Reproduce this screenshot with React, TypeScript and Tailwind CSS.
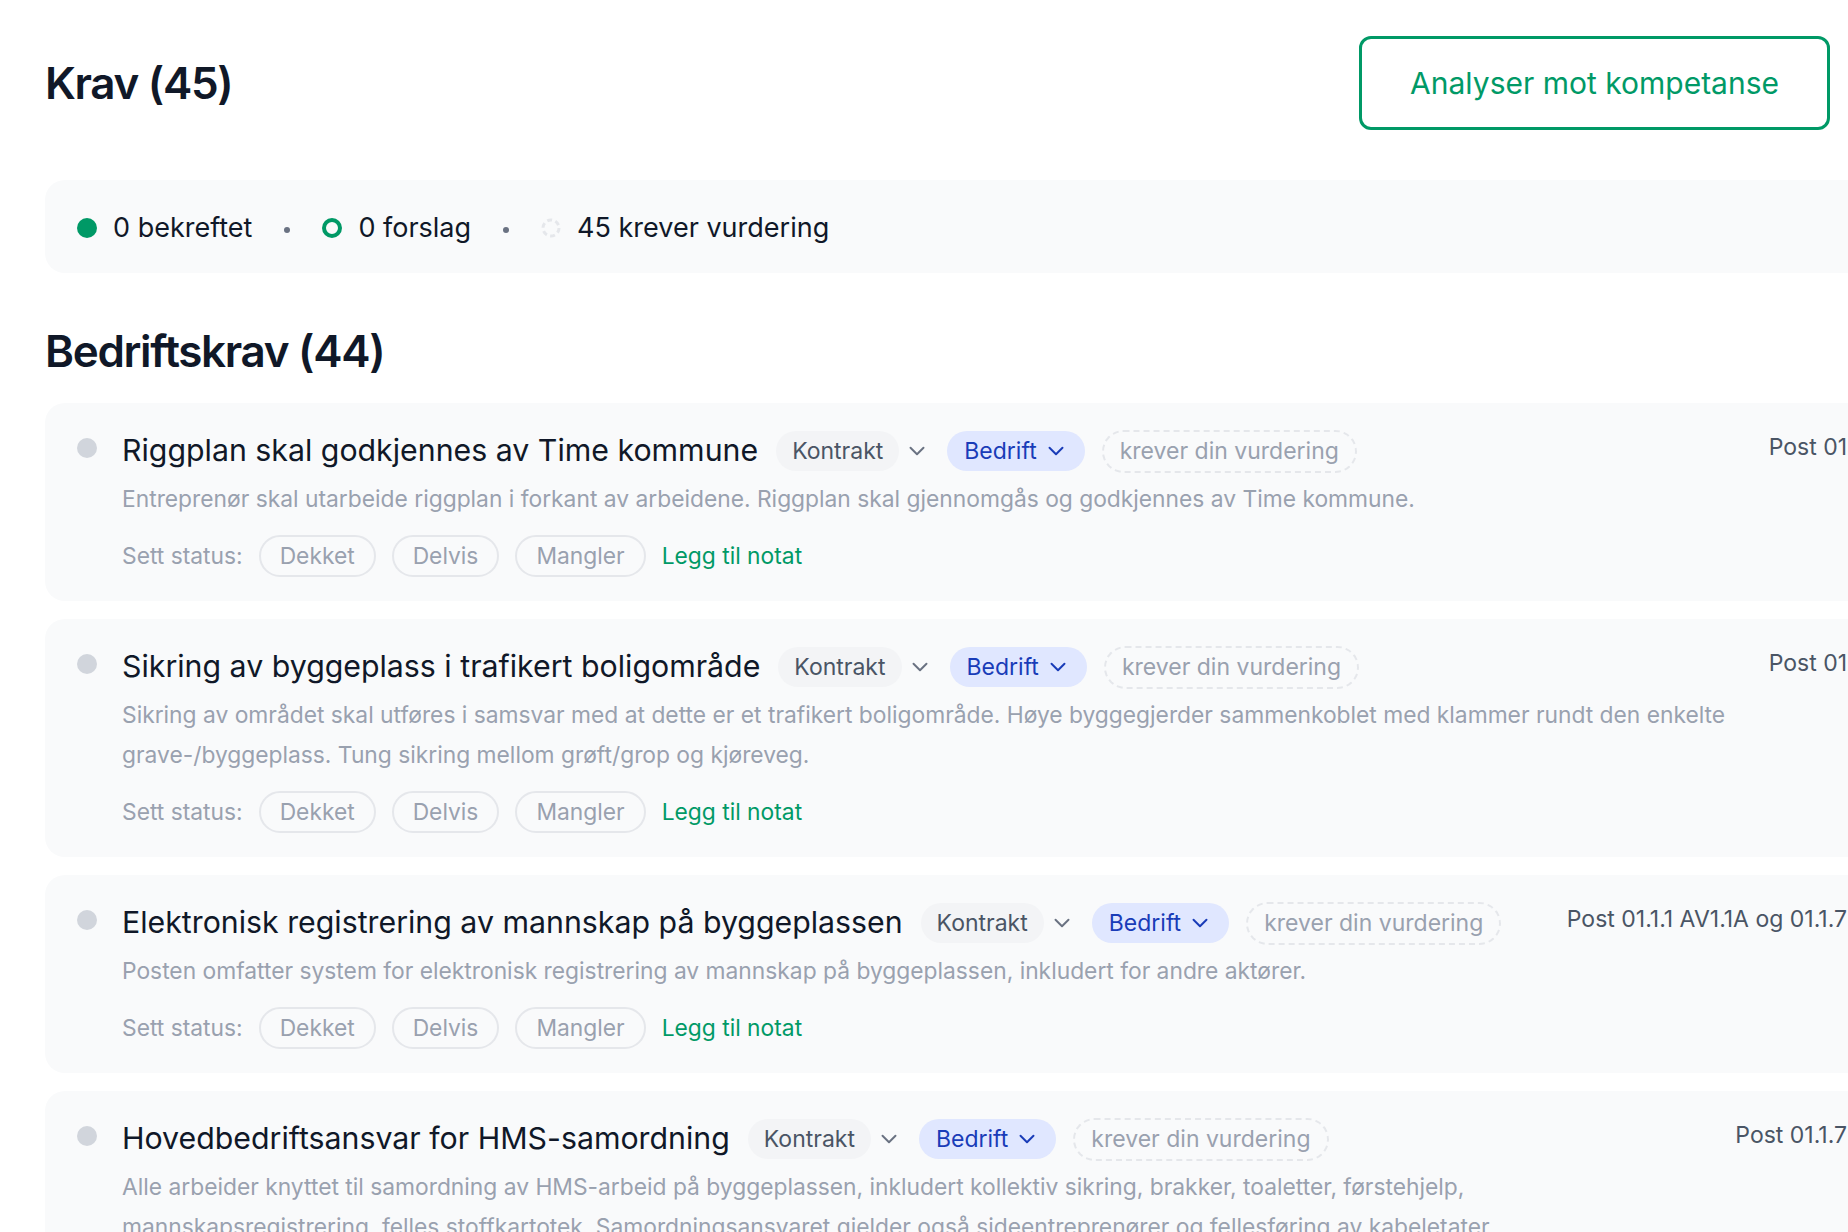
import { ChevronDown } from "lucide-react";

type Requirement = {
  id: number;
  title: string;
  description: string;
  post: string;
};

const requirements: Requirement[] = [
  {
    id: 1,
    title: "Riggplan skal godkjennes av Time kommune",
    description:
      "Entreprenør skal utarbeide riggplan i forkant av arbeidene. Riggplan skal gjennomgås og godkjennes av Time kommune.",
    post: "Post 01",
  },
  {
    id: 2,
    title: "Sikring av byggeplass i trafikert boligområde",
    description:
      "Sikring av området skal utføres i samsvar med at dette er et trafikert boligområde. Høye byggegjerder sammenkoblet med klammer rundt den enkelte grave-/byggeplass. Tung sikring mellom grøft/grop og kjøreveg.",
    post: "Post 01",
  },
  {
    id: 3,
    title: "Elektronisk registrering av mannskap på byggeplassen",
    description:
      "Posten omfatter system for elektronisk registrering av mannskap på byggeplassen, inkludert for andre aktører.",
    post: "Post 01.1.1 AV1.1A og 01.1.7",
  },
  {
    id: 4,
    title: "Hovedbedriftsansvar for HMS-samordning",
    description:
      "Alle arbeider knyttet til samordning av HMS-arbeid på byggeplassen, inkludert kollektiv sikring, brakker, toaletter, førstehjelp, mannskapsregistrering, felles stoffkartotek. Samordningsansvaret gjelder også sideentreprenører og fellesføring av kabeletater.",
    post: "Post 01.1.7",
  },
];

function PendingIcon() {
  return (
    <svg viewBox="0 0 20 20" className="size-5 shrink-0">
      <circle cx="10" cy="10" r="8" fill="none" stroke="#e5e7eb" strokeWidth="3" strokeDasharray="5 3.4" />
    </svg>
  );
}

function Bullet() {
  return <span className="mt-1 size-1.5 shrink-0 rounded-full bg-gray-500" />;
}

function StatusSummary() {
  return (
    <div className="mt-[50px] flex h-[93px] w-[1834px] items-center gap-8 rounded-[20px] bg-gray-50 px-8 pt-[3px] text-[27px] text-gray-900">
      <div className="flex items-center gap-4">
        <span className="size-5 rounded-full bg-emerald-600" />
        <span>0 bekreftet</span>
      </div>
      <Bullet />
      <div className="flex items-center gap-4">
        <span className="size-5 rounded-full border-4 border-emerald-600" />
        <span>0 forslag</span>
      </div>
      <Bullet />
      <div className="flex items-center gap-4">
        <PendingIcon />
        <span>45 krever vurdering</span>
      </div>
    </div>
  );
}

function RequirementCard({ req }: { req: Requirement }) {
  return (
    <div className="flex rounded-[20px] bg-gray-50 pt-7 pr-8 pb-6 pl-8">
      <span className="mt-[7px] size-5 shrink-0 rounded-full bg-gray-300" />
      <div className="ml-[25px] min-w-0 flex-1">
        <div className="flex h-10 items-center">
          <h3 className="whitespace-nowrap text-[30.3px] text-gray-900">{req.title}</h3>
          <span className="ml-[18px] flex h-10 items-center rounded-full bg-gray-100 px-4 text-[23px] text-gray-600">
            Kontrakt
          </span>
          <ChevronDown className="ml-[5px] size-[26px] text-gray-500" strokeWidth={1.8} />
          <span className="ml-[17px] flex h-10 items-center gap-1.5 rounded-full bg-indigo-100 pr-4 pl-[17px] text-[23px] text-blue-800">
            Bedrift
            <ChevronDown className="size-[26px]" strokeWidth={1.8} />
          </span>
          <span className="ml-[17px] flex h-[43px] items-center rounded-full border-2 border-dashed border-gray-200 px-4 text-[23px] text-gray-400">
            krever din vurdering
          </span>
        </div>
        <p className="mt-2 text-[22.8px] leading-10 text-gray-400">{req.description}</p>
        <div className="mt-4 flex items-center gap-4 text-[22.8px]">
          <span className="text-gray-400">Sett status:</span>
          {["Dekket", "Delvis", "Mangler"].map((label) => (
            <button
              key={label}
              className="flex h-[42px] items-center rounded-full border-2 border-gray-200 px-[19px] text-gray-400"
            >
              {label}
            </button>
          ))}
          <button className="text-emerald-600">Legg til notat</button>
        </div>
      </div>
      <div className="ml-6 shrink-0 whitespace-nowrap text-[23px] leading-8 text-gray-600">{req.post}</div>
    </div>
  );
}

export default function App() {
  return (
    <div className="h-screen overflow-hidden bg-white px-[45px] font-['Inter',sans-serif]">
      <header className="flex items-center justify-between pt-9">
        <h1 className="text-[44px] font-semibold tracking-[-0.03em] text-gray-900">Krav (45)</h1>
        <button className="mr-[-27px] flex h-[94px] items-center rounded-xl border-[3px] border-emerald-600 px-12 text-3xl text-emerald-600">
          Analyser mot kompetanse
        </button>
      </header>

      <StatusSummary />

      <h2 className="mt-[50px] mb-6 h-14 text-[44px] leading-14 font-semibold tracking-[-0.03em] text-gray-900">
        Bedriftskrav (44)
      </h2>

      <div className="flex w-[1834px] flex-col gap-[18px]">
        {requirements.map((req) => (
          <RequirementCard key={req.id} req={req} />
        ))}
      </div>
    </div>
  );
}
